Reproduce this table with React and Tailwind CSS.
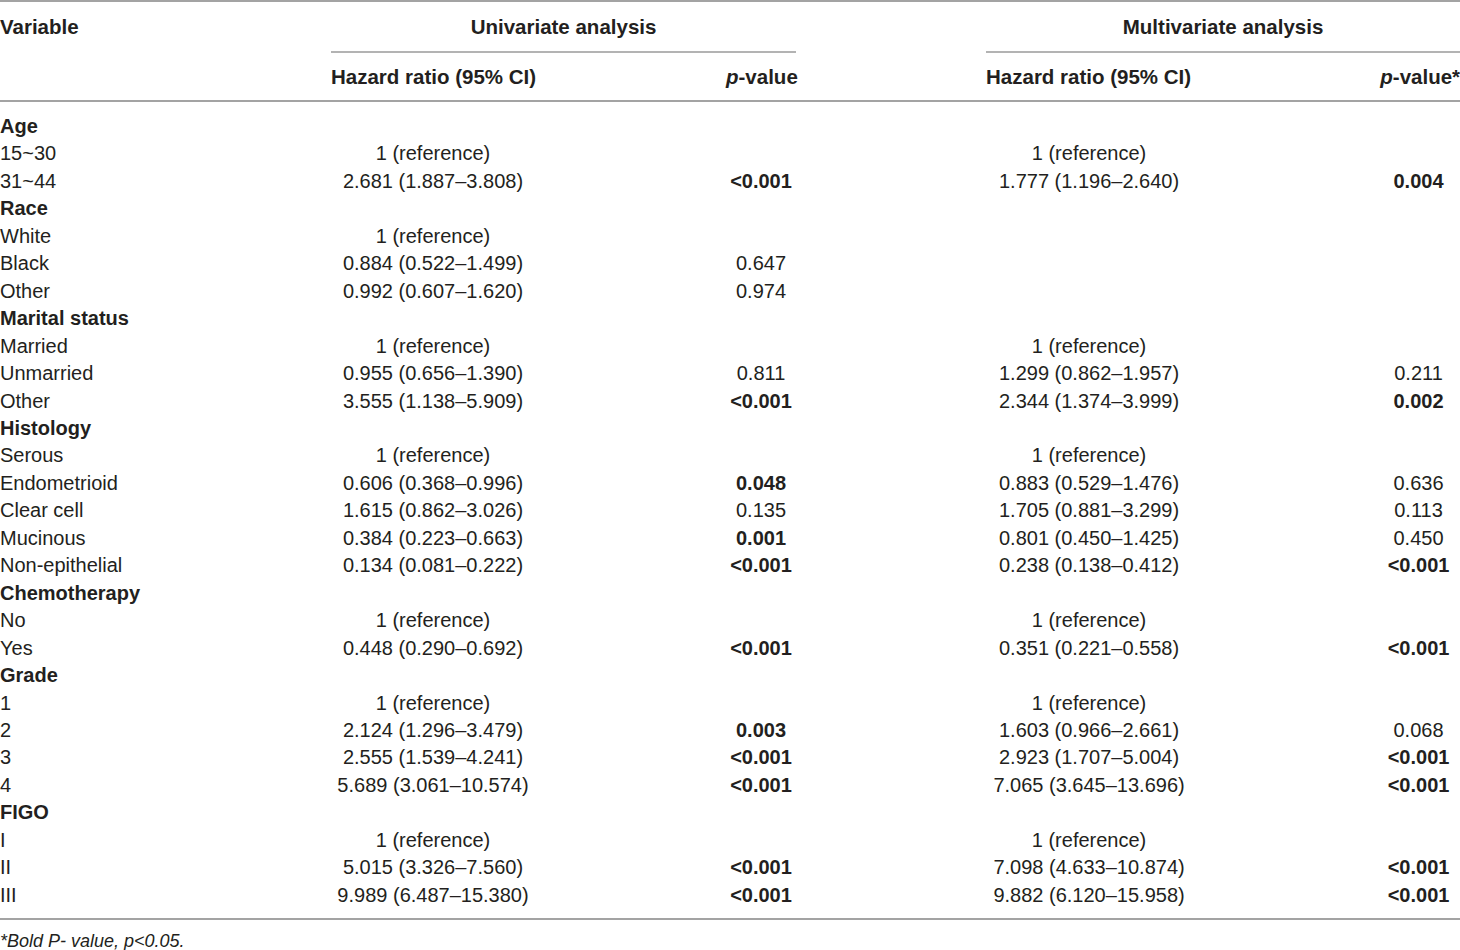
const rows = [
  { label: 'Age', group: true },
  { label: '15~30', uh: '1 (reference)', mh: '1 (reference)' },
  { label: '31~44', uh: '2.681 (1.887–3.808)', up: '<0.001', ub: true, mh: '1.777 (1.196–2.640)', mp: '0.004', mb: true },
  { label: 'Race', group: true },
  { label: 'White', uh: '1 (reference)' },
  { label: 'Black', uh: '0.884 (0.522–1.499)', up: '0.647' },
  { label: 'Other', uh: '0.992 (0.607–1.620)', up: '0.974' },
  { label: 'Marital status', group: true },
  { label: 'Married', uh: '1 (reference)', mh: '1 (reference)' },
  { label: 'Unmarried', uh: '0.955 (0.656–1.390)', up: '0.811', mh: '1.299 (0.862–1.957)', mp: '0.211' },
  { label: 'Other', uh: '3.555 (1.138–5.909)', up: '<0.001', ub: true, mh: '2.344 (1.374–3.999)', mp: '0.002', mb: true },
  { label: 'Histology', group: true },
  { label: 'Serous', uh: '1 (reference)', mh: '1 (reference)' },
  { label: 'Endometrioid', uh: '0.606 (0.368–0.996)', up: '0.048', ub: true, mh: '0.883 (0.529–1.476)', mp: '0.636' },
  { label: 'Clear cell', uh: '1.615 (0.862–3.026)', up: '0.135', mh: '1.705 (0.881–3.299)', mp: '0.113' },
  { label: 'Mucinous', uh: '0.384 (0.223–0.663)', up: '0.001', ub: true, mh: '0.801 (0.450–1.425)', mp: '0.450' },
  { label: 'Non-epithelial', uh: '0.134 (0.081–0.222)', up: '<0.001', ub: true, mh: '0.238 (0.138–0.412)', mp: '<0.001', mb: true },
  { label: 'Chemotherapy', group: true },
  { label: 'No', uh: '1 (reference)', mh: '1 (reference)' },
  { label: 'Yes', uh: '0.448 (0.290–0.692)', up: '<0.001', ub: true, mh: '0.351 (0.221–0.558)', mp: '<0.001', mb: true },
  { label: 'Grade', group: true },
  { label: '1', uh: '1 (reference)', mh: '1 (reference)' },
  { label: '2', uh: '2.124 (1.296–3.479)', up: '0.003', ub: true, mh: '1.603 (0.966–2.661)', mp: '0.068' },
  { label: '3', uh: '2.555 (1.539–4.241)', up: '<0.001', ub: true, mh: '2.923 (1.707–5.004)', mp: '<0.001', mb: true },
  { label: '4', uh: '5.689 (3.061–10.574)', up: '<0.001', ub: true, mh: '7.065 (3.645–13.696)', mp: '<0.001', mb: true },
  { label: 'FIGO', group: true },
  { label: 'I', uh: '1 (reference)', mh: '1 (reference)' },
  { label: 'II', uh: '5.015 (3.326–7.560)', up: '<0.001', ub: true, mh: '7.098 (4.633–10.874)', mp: '<0.001', mb: true },
  { label: 'III', uh: '9.989 (6.487–15.380)', up: '<0.001', ub: true, mh: '9.882 (6.120–15.958)', mp: '<0.001', mb: true },
];

export default function App() {
  return (
    <div className="w-[1460px] h-[950px] bg-white text-[#231f20] font-['Liberation_Sans',Arial,sans-serif] text-[20px]">
      <table className="w-[1460px] table-fixed border-collapse border-t-2 border-[#a3a3a3]">
        <colgroup>
          <col className="w-[331px]" />
          <col className="w-[204px]" />
          <col className="w-[191px]" />
          <col className="w-[70px]" />
          <col className="w-[190px]" />
          <col className="w-[206px]" />
          <col className="w-[185px]" />
          <col className="w-[83px]" />
        </colgroup>
        <thead className="font-bold text-[20.5px]">
          <tr className="h-[51px]">
            <th className="text-left align-middle p-0 pt-[1px]">Variable</th>
            <th colSpan={3} className="text-center p-0 pt-[1px] border-b-2 border-[#b3b3b3]">Univariate analysis</th>
            <th className="p-0"></th>
            <th colSpan={3} className="text-center p-0 pt-[1px] border-b-2 border-[#b3b3b3]">Multivariate analysis</th>
          </tr>
          <tr className="h-[49px] border-b-2 border-[#a3a3a3]">
            <th className="p-0"></th>
            <th colSpan={2} className="text-left p-0 pt-[2px]">Hazard ratio (95% CI)</th>
            <th className="text-right p-0 pt-[2px] whitespace-nowrap"><i>p</i>-value</th>
            <th className="p-0"></th>
            <th colSpan={2} className="text-left p-0 pt-[2px]">Hazard ratio (95% CI)</th>
            <th className="text-right p-0 pt-[2px] whitespace-nowrap"><i>p</i>-value*</th>
          </tr>
        </thead>
        <tbody>
          <tr className="h-[12px]"><td colSpan={8} className="p-0"></td></tr>
          {rows.map((r, i) => (
            <tr key={i} className="h-[27.46px] leading-[27.46px]">
              <td className={'p-0 whitespace-nowrap ' + (r.group ? 'font-bold' : '')}>{r.label}</td>
              <td className="p-0 text-center whitespace-nowrap">{r.uh}</td>
              <td className="p-0"></td>
              <td className={'p-0 text-center whitespace-nowrap ' + (r.ub ? 'font-bold' : '')}>{r.up}</td>
              <td className="p-0"></td>
              <td className="p-0 text-center whitespace-nowrap">{r.mh}</td>
              <td className="p-0"></td>
              <td className={'p-0 text-center whitespace-nowrap ' + (r.mb ? 'font-bold' : '')}>{r.mp}</td>
            </tr>
          ))}
          <tr className="h-[10px] border-b-2 border-[#a3a3a3]"><td colSpan={8} className="p-0"></td></tr>
        </tbody>
      </table>
      <p className="pt-[11px] text-[18px] italic leading-[20px]">*Bold P- value, p&lt;0.05.</p>
    </div>
  );
}
